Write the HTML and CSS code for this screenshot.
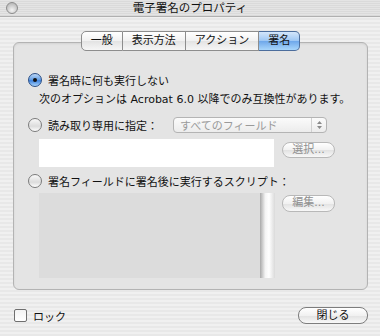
FILE: index.html
```html
<!DOCTYPE html>
<html lang="ja">
<head>
    <meta charset="UTF-8">
    <title>電子署名のプロパティ</title>
    <link rel="stylesheet" href="styles.css">
</head>
<body>
    <div class="window">
        <div class="titlebar">
            <span class="close-btn"></span>
            <span class="title">電子署名のプロパティ</span>
        </div>

        <div class="tabs">
            <div class="tab">一般</div>
            <div class="tab">表示方法</div>
            <div class="tab">アクション</div>
            <div class="tab selected">署名</div>
        </div>

        <div class="panel">
            <div class="opt first">
                <span class="radio checked"></span>
                <span>署名時に何も実行しない</span>
            </div>
            <div class="note">次のオプションは Acrobat 6.0 以降でのみ互換性があります。</div>

            <div class="opt second">
                <span class="radio"></span>
                <span>読み取り専用に指定：</span>
                <div class="popup">
                    <span>すべてのフィールド</span>
                    <span class="arrows">
                        <svg width="7" height="10" viewBox="0 0 7 10"><path d="M3.5 1 L6 4 L1 4 Z M3.5 9 L6 6 L1 6 Z" fill="#8a8a8a"/></svg>
                    </span>
                </div>
            </div>

            <div class="field-row">
                <div class="textfield"></div>
                <div class="btn disabled">選択...</div>
            </div>

            <div class="opt third">
                <span class="radio"></span>
                <span>署名フィールドに署名後に実行するスクリプト：</span>
            </div>

            <div class="script-row">
                <div class="script-area">
                    <div class="script-text"></div>
                    <div class="scrollbar"></div>
                </div>
                <div class="btn disabled">編集...</div>
            </div>
        </div>

        <div class="footer">
            <label class="lock">
                <span class="checkbox"></span>
                <span>ロック</span>
            </label>
            <div class="btn close">閉じる</div>
        </div>
    </div>
</body>
</html>
```

FILE: styles.css
```css
body {
    margin: 0;
    font-family: "DejaVu Sans", "Noto Sans CJK JP", sans-serif;
    font-size: 11px;
    color: #111;
}

.window {
    width: 380px;
    height: 336px;
    background: repeating-linear-gradient(#f0f0f0 0 2px, #e8e8e8 2px 4px);
    overflow: hidden;
}

.titlebar {
    height: 16px;
    display: flex;
    align-items: center;
    justify-content: center;
    position: relative;
    background: repeating-linear-gradient(#e4e4e4 0 1px, #dadada 1px 2px);
    border-bottom: 1px solid #b0b0b0;
}

.title {
    font-size: 11.5px;
    line-height: 16px;
}

.close-btn {
    position: absolute;
    left: 6px;
    top: 2px;
    width: 10px;
    height: 10px;
    border-radius: 50%;
    border: 1px solid #8c8c8c;
    background: radial-gradient(circle at 50% 70%, #f4f4f4, #bdbdbd 75%);
}

/* tabs sit across the top edge of the panel */
.tabs {
    display: flex;
    justify-content: center;
    margin-top: 14px;
    margin-left: 1px;
    position: relative;
    z-index: 1;
}

.tab {
    height: 18px;
    line-height: 18px;
    padding: 0 9px;
    background: linear-gradient(#ffffff, #f1f1f1 50%, #e3e3e3 51%, #f6f6f6);
    border: 1px solid #8d8d8d;
    border-left: none;
    text-align: center;
}

.tab:first-child {
    border-left: 1px solid #8d8d8d;
    border-radius: 5px 0 0 5px;
}

.tab.selected {
    border-radius: 0 5px 5px 0;
    border-color: #4c6d9c;
    background: linear-gradient(#d4e6fb, #9cc6f3 50%, #6ea7ea 51%, #a9d6fb);
}

.panel {
    box-sizing: border-box;
    margin: -9px 12px 0 13px;
    height: 248px;
    border: 1px solid #b3b3b3;
    border-radius: 6px;
    background: #e4e4e4;
    box-shadow: inset 0 1px 2px rgba(0, 0, 0, 0.08);
}

.opt {
    display: flex;
    align-items: center;
    height: 16px;
    padding-left: 14px;
}

.opt.first { margin-top: 29px; }
.opt.second { margin-top: 9px; }
.opt.third { margin-top: 6px; }

.radio {
    box-sizing: border-box;
    width: 14px;
    height: 14px;
    margin-right: 6px;
    border-radius: 50%;
    border: 1px solid #7b7b7b;
    background: linear-gradient(#f9f9f9, #dcdcdc 60%, #ffffff);
    display: flex;
    align-items: center;
    justify-content: center;
}

.radio.checked {
    border-color: #2c4f86;
    background: linear-gradient(#bcd8f7, #5f9be3 50%, #3f82dc 55%, #a7d3fb);
}

.radio.checked::after {
    content: "";
    width: 4px;
    height: 4px;
    border-radius: 50%;
    background: #111;
}

.note {
    margin-top: 4px;
    padding-left: 25px;
    height: 16px;
    line-height: 16px;
}

.popup {
    box-sizing: border-box;
    display: flex;
    align-items: center;
    justify-content: space-between;
    width: 154px;
    height: 16px;
    margin-left: auto;
    margin-right: 40px;
    padding-left: 6px;
    border: 1px solid #b4b4b4;
    border-radius: 4px;
    background: linear-gradient(#fbfbfb, #ececec);
    color: #9a9a9a;
}

.arrows {
    display: flex;
    align-items: center;
    justify-content: center;
    width: 14px;
    height: 100%;
    border-left: 1px solid #d0d0d0;
}

.field-row {
    display: flex;
    align-items: flex-start;
    gap: 8px;
    margin-top: 6px;
    padding-left: 25px;
}

.textfield {
    width: 235px;
    height: 28px;
    background: #ffffff;
}

.btn {
    box-sizing: border-box;
    height: 16px;
    line-height: 14px;
    padding: 0 6px;
    border: 1px solid #9f9f9f;
    border-radius: 8px;
    background: linear-gradient(#ffffff, #f1f1f1 50%, #e2e2e2 52%, #f8f8f8);
    text-align: center;
}

.field-row .btn {
    width: 53px;
    margin-top: 3px;
}

.btn.disabled {
    color: #8f8f8f;
    border-color: #b8b8b8;
}

.script-row {
    display: flex;
    align-items: flex-start;
    gap: 7px;
    margin-top: 4px;
    padding-left: 25px;
}

.script-area {
    display: flex;
    width: 236px;
    height: 85px;
}

.script-text {
    flex: 1;
    background: #dcdcdc;
}

.scrollbar {
    width: 15px;
    background: linear-gradient(to right, #a9a9a9, #f4f4f4 35%, #ffffff 60%, #dadada);
}

.script-row .btn {
    width: 53px;
    height: 17px;
    margin-top: 2px;
}

.footer {
    display: flex;
    align-items: center;
    justify-content: space-between;
    margin: 17px 12px 0 14px;
}

.lock {
    display: flex;
    align-items: center;
    gap: 6px;
}

.checkbox {
    box-sizing: border-box;
    width: 13px;
    height: 13px;
    border: 1px solid #6f6f6f;
    border-radius: 2px;
    background: linear-gradient(#f3f3f3, #ffffff);
}

.btn.close {
    width: 70px;
    height: 17px;
    line-height: 15px;
    border-color: #7d7d7d;
}
```
